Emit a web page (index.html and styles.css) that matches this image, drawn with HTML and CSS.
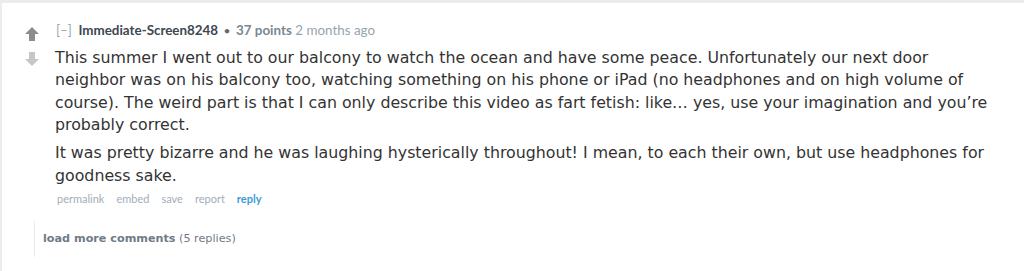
FILE: index.html
```html
<!DOCTYPE html>
<html>
<head>
<meta charset="utf-8">
<link rel="stylesheet" href="styles.css">
</head>
<body>
<div class="page">
  <div class="card">
    <div class="comment">
      <div class="votes">
        <svg class="arrow up" width="14" height="14" viewBox="0 0 14 14"><path d="M7 0 L14 7 L10 7 L10 14 L4 14 L4 7 L0 7 Z" fill="#8c8c8c"/></svg>
        <svg class="arrow down" width="14" height="14" viewBox="0 0 14 14"><path d="M4 0 L10 0 L10 7 L14 7 L7 14 L0 7 L4 7 Z" fill="#c6c6c6"/></svg>
      </div>
      <div class="entry">
        <div class="tagline">
          <span class="expand">[–]</span>
          <span class="author">Immediate-Screen8248</span>
          <span class="dot">•</span>
          <span class="score">37 points</span>
          <span class="time">2 months ago</span>
        </div>
        <div class="body">
          <p>This summer I went out to our balcony to watch the ocean and have some peace. Unfortunately our next door neighbor was on his balcony too, watching something on his phone or iPad (no headphones and on high volume of course). The weird part is that I can only describe this video as fart fetish: like… yes, use your imagination and you’re probably correct.</p>
          <p>It was pretty bizarre and he was laughing hysterically throughout! I mean, to each their own, but use headphones for goodness sake.</p>
        </div>
        <ul class="buttons">
          <li>permalink</li>
          <li>embed</li>
          <li>save</li>
          <li>report</li>
          <li class="reply">reply</li>
        </ul>
      </div>
    </div>
    <div class="more">
      <span class="more-link">load more comments</span> <span class="count">(5 replies)</span>
    </div>
  </div>
</div>
</body>
</html>
```
FILE: styles.css
```css
html, body {
  margin: 0;
  padding: 0;
  background: #ececec;
}
.page {
  padding: 3px 0 0 2px;
  height: 268px;
}
.card {
  background: #fff;
  height: 268px;
}
.comment {
  display: flex;
  padding-top: 18px;
}
.votes {
  width: 53px;
  flex: none;
  display: flex;
  flex-direction: column;
  align-items: center;
  padding-left: 6px;
  padding-top: 6px;
  box-sizing: border-box;
  gap: 11px;
}
.votes .arrow { display: block; }
.entry {
  width: 942px;
}
.tagline {
  font-family: Lato, "Liberation Sans", sans-serif;
  font-size: 13.4px;
  line-height: 18px;
  color: #888;
  white-space: nowrap;
  padding-left: 1px;
}
.expand { color: #9aa7b5; margin-right: 3px; }
.author { font-weight: bold; color: #3d4750; }
.dot { color: #666; font-size: 12px; margin: 0 2px; }
.score { font-weight: bold; color: #7a8792; }
.time { color: #98a4ae; }
.body {
  font-family: "DejaVu Sans", Verdana, sans-serif;
  font-size: 15.8px;
  line-height: 22.33px;
  color: #333;
  margin-top: 7px;
}
.body p { margin: 0 0 6px 0; }
.body p:last-child { margin-bottom: 5px; }
.buttons {
  list-style: none;
  margin: 0;
  padding: 0 0 0 2px;
  display: flex;
  gap: 12px;
  font-family: Lato, "Liberation Sans", sans-serif;
  font-size: 11px;
  line-height: 14px;
  color: #a3adb7;
}
.buttons .reply { color: #3a9ad9; font-weight: bold; }
.more {
  margin: 15px 0 0 32px;
  border-left: 1px solid #eaeaea;
  padding: 11px 0 11px 8px;
  font-family: "DejaVu Sans", Verdana, sans-serif;
  font-size: 11.2px;
  line-height: 14px;
  color: #707b86;
}
.more-link { font-weight: bold; }
```
